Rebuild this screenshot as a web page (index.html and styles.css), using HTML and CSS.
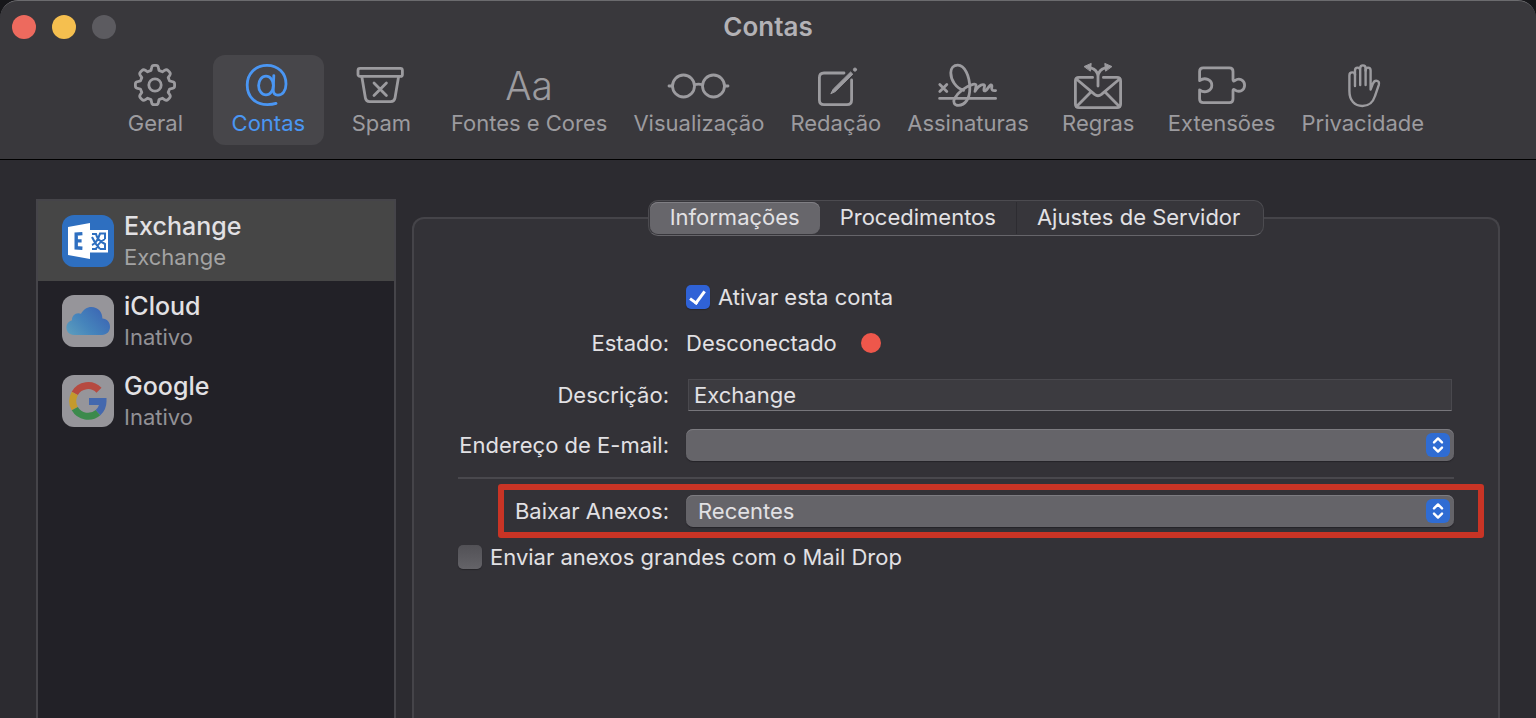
FILE: index.html
```html
<!DOCTYPE html>
<html lang="pt-BR">
<head>
    <meta charset="UTF-8">
    <meta name="viewport" content="width=device-width, initial-scale=1.0">
    <title>Contas</title>
    <link rel="stylesheet" href="styles.css">
</head>
<body>

    <div class="window">
        <header class="toolbar">
            <div class="titlebar">
                <div class="lights">
                    <button class="light close" aria-label="Fechar"></button>
                    <button class="light minimize" aria-label="Minimizar"></button>
                    <button class="light zoom" aria-label="Ampliar" disabled></button>
                </div>
                <h1>Contas</h1>
            </div>

            <nav class="tools">
                <button class="tool">
                    <svg width="64" height="48" viewBox="0 0 64 48">
                        <path d="M28.6 6.6 Q29 4.4 31 4.4 H33 Q35 4.4 35.4 6.6 L36 9.4 L39.4 10.8 L41.8 9.2 Q43.6 8.1 45 9.5 L46.5 11 Q47.9 12.4 46.8 14.2 L45.2 16.6 L46.6 20 L49.4 20.6 Q51.6 21 51.6 23 V25 Q51.6 27 49.4 27.4 L46.6 28 L45.2 31.4 L46.8 33.8 Q47.9 35.6 46.5 37 L45 38.5 Q43.6 39.9 41.8 38.8 L39.4 37.2 L36 38.6 L35.4 41.4 Q35 43.6 33 43.6 H31 Q29 43.6 28.6 41.4 L28 38.6 L24.6 37.2 L22.2 38.8 Q20.4 39.9 19 38.5 L17.5 37 Q16.1 35.6 17.2 33.8 L18.8 31.4 L17.4 28 L14.6 27.4 Q12.4 27 12.4 25 V23 Q12.4 21 14.6 20.6 L17.4 20 L18.8 16.6 L17.2 14.2 Q16.1 12.4 17.5 11 L19 9.5 Q20.4 8.1 22.2 9.2 L24.6 10.8 L28 9.4 Z"/>
                        <circle cx="32" cy="24" r="6.2"/>
                    </svg>
                    <span>Geral</span>
                </button>
                <button class="tool active">
                    <svg width="64" height="48" viewBox="0 0 64 48">
                        <ellipse cx="30" cy="24.5" rx="7.4" ry="9.4"/>
                        <path d="M37.8 14.6 L37.2 28 Q37 34.2 41.9 34.2 C46.7 34.2 50 29.4 50 23 C50 12 42 4.4 31 4.4 C19.4 4.4 11.2 12.6 11.2 24 C11.2 36 19.4 43.6 31.4 43.6 Q36.6 43.6 40 42.4"/>
                    </svg>
                    <span>Contas</span>
                </button>
                <button class="tool">
                    <svg width="64" height="48" viewBox="0 0 64 48">
                        <rect x="9" y="7.4" width="44.4" height="8" rx="2"/>
                        <path d="M12.8 15.6 L16.4 37 Q17 40.6 20.6 40.6 H41.8 Q45.4 40.6 46 37 L49.6 15.6"/>
                        <path d="M25 22 L37.4 34.4 M37.4 22 L25 34.4"/>
                    </svg>
                    <span>Spam</span>
                </button>
                <button class="tool">
                    <span class="letters">Aa</span>
                    <span>Fontes e Cores</span>
                </button>
                <button class="tool">
                    <svg width="64" height="48" viewBox="0 0 64 48">
                        <circle cx="16.5" cy="25" r="11"/>
                        <circle cx="46.5" cy="25" r="11"/>
                        <path d="M2 25 H5.5 M57.5 25 H61"/>
                        <path d="M27.5 23.8 Q31.5 22.4 35.5 23.8"/>
                    </svg>
                    <span>Visualização</span>
                </button>
                <button class="tool">
                    <svg width="64" height="48" viewBox="0 0 64 48">
                        <path d="M40 12 H20 Q15.4 12 15.4 16.6 V39 Q15.4 43.6 20 43.6 H43 Q47.6 43.6 47.6 39 V19"/>
                        <path class="solid" d="M27 32.4 L29.2 28.2 L46.6 11 L48.8 13.2 L31.4 30.4 Z"/>
                        <circle class="solid" cx="51" cy="8.6" r="1.6"/>
                    </svg>
                    <span>Redação</span>
                </button>
                <button class="tool">
                    <svg width="64" height="48" viewBox="0 0 64 48">
                        <path d="M3.8 23.4 L10.8 30.4 M10.8 23.4 L3.8 30.4 M3.6 37.4 H59.6"/>
                        <path d="M27.6 29.4 C20 27 14.8 19.4 14.8 11.8 C14.8 7 17.6 4.2 21.8 4.2 C28.6 4.2 33.8 15 33.8 27.4 C33.8 37.4 29.2 44.4 22.4 44.4 C18.4 44.4 16.6 41.2 18.6 37.4 C21.4 31.8 29.4 25.4 37 23.4 Q40.6 22.6 40 25.4 L39 30.4 C41 27 44.4 23.8 47 23.6 Q49.2 23.6 48.4 26.2 Q47 30.6 49.4 29.8 C51.4 28.8 53 24.8 54.6 24 Q56.4 23.8 55.8 26 Q54.8 30.4 59.6 29.6"/>
                    </svg>
                    <span>Assinaturas</span>
                </button>
                <button class="tool">
                    <svg width="64" height="48" viewBox="0 0 64 48">
                        <path d="M26.6 16.4 H13 Q9.4 16.4 9.4 20 V43 Q9.4 46.6 13 46.6 H51 Q54.6 46.6 54.6 43 V20 Q54.6 16.4 51 16.4 H37.4"/>
                        <path d="M10.4 18 L28.6 33.4 Q32 36 35.4 33.4 L53.6 18 M10.6 45.6 L25.2 30.8 M53.4 45.6 L38.8 30.8"/>
                        <path d="M32 25 V15.6 Q32 11 27.6 8 L24 6.6 M32 15.6 Q32 11 36.4 8 L40 6.6"/>
                        <path class="solid" d="M18.4 5.4 L25.2 2.4 L24.4 9.8 Z M45.6 5.4 L38.8 2.4 L39.6 9.8 Z"/>
                    </svg>
                    <span>Regras</span>
                </button>
                <button class="tool">
                    <svg width="64" height="48" viewBox="0 0 64 48">
                        <path d="M9.6 19.6 V10.4 Q9.6 6.8 13.2 6.8 H39.4 Q43 6.8 43 10.4 V18.6 Q43 20.8 44.8 19.6 C49.2 16.4 54.6 19 54.6 24.2 C54.6 29.4 49.2 32 44.8 28.8 Q43 27.6 43 29.8 V38 Q43 41.6 39.4 41.6 H13.2 Q9.6 41.6 9.6 38 V28.8 C15 33 21.8 29.6 21.8 24.2 C21.8 18.8 15 15.6 9.6 19.6 Z"/>
                    </svg>
                    <span>Extensões</span>
                </button>
                <button class="tool">
                    <svg class="hand" width="64" height="48" viewBox="0 0 64 48">
                        <path d="M24 25 V13.8 Q24 11.4 21.2 11.4 Q18.4 11.4 18.4 14.4 V30 C18.4 39.4 23.6 45 31.4 45 C38.4 45 42 41.4 44 35 L47.8 23.8 Q48.6 20.4 46 19.8 Q43.4 19.2 42 22.4 L39.6 28.6 V9.6 Q39.6 6.6 37 6.6 Q34.6 6.6 34.6 9.6"/>
                        <path d="M29.2 24 V7.4 Q29.2 4.4 31.9 4.4 Q34.6 4.4 34.6 7.4 V24 M24 14 V9.6 Q24 6.6 26.6 6.6 Q29.2 6.6 29.2 9.6"/>
                    </svg>
                    <span>Privacidade</span>
                </button>
            </nav>
        </header>

        <main class="content">
            <ul class="accounts">
                <li>
                    <button class="account selected">
                        <svg width="52" height="52" viewBox="0 0 52 52">
                            <rect width="52" height="52" rx="12" fill="#2e6fc0"/>
                            <path d="M27 15 H46 V37.6 H27 Z" fill="#fff"/>
                            <path d="M30 19 H34 Q35 25 43 29 V34 H38 M43 24 V18.6 H38 Q35 28 30 30 M30 34 H34 Q36 28 43 24 M30 22 Q33 29 38 34" fill="none" stroke="#2e6fc0" stroke-width="2"/>
                            <path d="M6 12 L28 8 V44 L6 40 Z" fill="#fff"/>
                            <path d="M20.4 18.6 L14.2 19 V32.8 L20.4 33.2 M14 25.9 H19.6" fill="none" stroke="#2e6fc0" stroke-width="3.4"/>
                        </svg>
                        <span class="texts">
                            <span class="name">Exchange</span>
                            <span class="state">Exchange</span>
                        </span>
                    </button>
                </li>
                <li>
                    <button class="account">
                        <svg width="52" height="52" viewBox="0 0 52 52">
                            <defs>
                                <linearGradient id="cloud" x1="0" y1="1" x2="1" y2="0.4">
                                    <stop offset="0" stop-color="#5d9fbe"/>
                                    <stop offset="0.5" stop-color="#4583bb"/>
                                    <stop offset="1" stop-color="#3c67b4"/>
                                </linearGradient>
                            </defs>
                            <rect width="52" height="52" rx="12" fill="#96959a"/>
                            <path d="M12 40 C7 40 4.4 36.6 4.4 32.6 C4.4 28.6 7 26 10 25.2 C9.6 20.6 14.4 16.6 19 18.8 C21.4 14.4 25 12 29.4 12 C36 12 40.4 17 40.4 23.6 C45 24 48 27.4 48 31.8 C48 36.6 44.6 40 40 40 Z" fill="url(#cloud)"/>
                        </svg>
                        <span class="texts">
                            <span class="name">iCloud</span>
                            <span class="state">Inativo</span>
                        </span>
                    </button>
                </li>
                <li>
                    <button class="account">
                        <svg width="52" height="52" viewBox="0 0 52 52">
                            <rect width="52" height="52" rx="12" fill="#96959a"/>
                            <g fill="none" stroke-width="7">
                                <path d="M12.8 18.4 A15.2 15.2 0 0 1 37 15.2" stroke="#b64a40"/>
                                <path d="M12.8 33.6 A15.2 15.2 0 0 1 12.8 18.4" stroke="#c49a2c"/>
                                <path d="M36 37.6 A15.2 15.2 0 0 1 12.8 33.6" stroke="#3c8a4c"/>
                                <path d="M27 26.4 H41 A15.2 15.2 0 0 1 36 37.6" stroke="#4468ae"/>
                            </g>
                        </svg>
                        <span class="texts">
                            <span class="name">Google</span>
                            <span class="state">Inativo</span>
                        </span>
                    </button>
                </li>
            </ul>

            <section class="panel">
                <div class="tabs">
                    <button class="tab current">Informações</button>
                    <button class="tab">Procedimentos</button>
                    <button class="tab">Ajustes de Servidor</button>
                </div>

                <form class="form">
                    <div class="row tight">
                        <label class="check second">
                            <input type="checkbox" name="enabled" checked>
                            Ativar esta conta
                        </label>
                    </div>
                    <div class="row state-row">
                        <span class="caption">Estado:</span>
                        <span class="status">Desconectado <i class="dot"></i></span>
                    </div>
                    <div class="row">
                        <label class="caption" for="description">Descrição:</label>
                        <input class="text" type="text" id="description" value="Exchange">
                    </div>
                    <div class="row">
                        <label class="caption" for="email">Endereço de E-mail:</label>
                        <div class="popup">
                            <select id="email">
                                <option></option>
                            </select>
                            <svg class="arrows" width="24" height="24" viewBox="0 0 24 24">
                                <path d="M8 9.4 L12 5.4 L16 9.4 M8 14.6 L12 18.6 L16 14.6"/>
                            </svg>
                        </div>
                    </div>
                    <hr>
                    <div class="row tight marked">
                        <label class="caption" for="attachments">Baixar Anexos:</label>
                        <div class="popup">
                            <select id="attachments">
                                <option>Recentes</option>
                            </select>
                            <svg class="arrows" width="24" height="24" viewBox="0 0 24 24">
                                <path d="M8 9.4 L12 5.4 L16 9.4 M8 14.6 L12 18.6 L16 14.6"/>
                            </svg>
                        </div>
                    </div>
                    <label class="check">
                        <input type="checkbox" name="maildrop">
                        Enviar anexos grandes com o Mail Drop
                    </label>
                </form>
            </section>
        </main>
    </div>

</body>
</html>
```

FILE: styles.css
```css
* {
    box-sizing: border-box;
}
body {
    margin: 0;
    background: #17171a;
    color: #e2e1e4;
    font-family: Inter, "Liberation Sans", sans-serif;
    font-size: 22px;
    line-height: 28px;
}
button, input, select {
    font: inherit;
    color: inherit;
}
button {
    padding: 0;
    border: none;
    background: none;
}
.window {
    display: flex;
    flex-direction: column;
    height: 100vh;
    overflow: hidden;
    background: #2c2b30;
    border-radius: 18px 18px 0 0;
}

/* toolbar */
.toolbar {
    height: 160px;
    flex: none;
    background: #39383c;
    border-top: 1px solid #6b6b6e;
    border-bottom: 1px solid #000;
    border-radius: 18px 18px 0 0;
}
.titlebar {
    display: grid;
    grid-template-columns: 1fr auto 1fr;
    align-items: center;
    height: 52px;
    padding: 0 12px;
}
.lights {
    display: flex;
    gap: 16px;
}
.light {
    width: 24px;
    height: 24px;
    border-radius: 50%;
}
.close {
    background: #ed6a5e;
}
.minimize {
    background: #f5bf4f;
}
.zoom {
    background: #5c5b60;
}
h1 {
    margin: 0;
    font-size: 26px;
    font-weight: 600;
    color: #b3b2b6;
}
.tools {
    display: flex;
    justify-content: center;
    gap: 2px;
    margin-top: 2px;
}
.tool {
    display: flex;
    flex-direction: column;
    align-items: center;
    min-width: 111px;
    height: 90px;
    padding: 6px 12px 0;
    border-radius: 12px;
    color: #9c9b9f;
    white-space: nowrap;
}
.tool.active {
    background: #47464a;
    color: #4a96f3;
}
.tool svg {
    overflow: visible;
    fill: none;
    stroke: currentColor;
    stroke-width: 2.8;
    stroke-linecap: round;
    stroke-linejoin: round;
}
.tool .hand {
    stroke-width: 2.4;
}
.tool .solid {
    fill: currentColor;
    stroke-width: 1;
}
.letters {
    height: 48px;
    line-height: 50px;
    font-size: 39px;
    font-weight: 300;
}

/* accounts */
.content {
    display: flex;
    flex: 1;
    gap: 16px;
    min-height: 0;
    padding: 39px 36px 0;
}
.accounts {
    flex: 0 0 360px;
    margin: 0;
    padding: 0;
    list-style: none;
    background: #222127;
    border: 2px solid #454449;
    border-bottom: none;
}
.account {
    display: flex;
    align-items: center;
    gap: 10px;
    width: 100%;
    height: 80px;
    padding: 0 24px;
    text-align: left;
}
.account.selected {
    background: #464646;
}
.texts {
    display: flex;
    flex-direction: column;
}
.name {
    font-size: 25px;
    line-height: 32px;
    font-weight: 500;
}
.state {
    line-height: 30px;
    color: #929196;
}
.selected .state {
    color: #a3a3a3;
}

/* settings */
.panel {
    flex: 1;
    margin-top: 18px;
    background: #333237;
    border: 2px solid #454449;
    border-bottom: none;
    border-radius: 12px 12px 0 0;
}
.tabs {
    display: flex;
    width: fit-content;
    height: 36px;
    margin: -19px auto 0;
    padding: 1px;
    background: #37363b;
    border: 1px solid #4c4b50;
    border-bottom-color: #66656a;
    border-radius: 10px;
}
.tab {
    padding: 0 20px 2px;
    border-radius: 8px;
}
.tab.current {
    background: #67666b;
    box-shadow: inset 0 1px #807f84;
}
.tab + .tab + .tab {
    padding-right: 22px;
    border-left: 1px solid #2d2c31;
    border-radius: 0;
}
.form {
    padding: 45px 44px 0;
}
.row {
    display: grid;
    grid-template-columns: 211px 1fr;
    column-gap: 17px;
    align-items: center;
    min-height: 32px;
    margin-bottom: 18px;
}
.row.tight {
    margin-bottom: 14px;
}
.row.state-row {
    margin-bottom: 20px;
}
.caption {
    text-align: right;
    white-space: nowrap;
}
.second {
    grid-column: 2;
}
.check {
    display: flex;
    align-items: center;
    gap: 8px;
    min-height: 32px;
}
.check input {
    appearance: none;
    flex: none;
    width: 24px;
    height: 24px;
    margin: 0;
    border-radius: 5px;
    background: linear-gradient(#525156, #646368);
    box-shadow: 0 1px 1px #252429;
}
.check input:checked {
    background: #2f62d6;
}
.check input:checked::before {
    content: "";
    display: block;
    width: 6px;
    height: 13px;
    margin: 3px 7px;
    border: solid #fff;
    border-width: 0 3px 3px 0;
    transform: rotate(36deg);
}
.status {
    display: flex;
    align-items: center;
    gap: 24px;
}
.dot {
    width: 20px;
    height: 20px;
    border-radius: 50%;
    background: #ee574b;
}
.text {
    height: 32px;
    margin: 0 2px;
    padding: 0 5px;
    background: #3c3b40;
    border: 1px solid #4a494e;
    border-bottom-color: #77767b;
    outline: none;
}
.popup {
    position: relative;
}
.popup select {
    display: block;
    appearance: none;
    width: 100%;
    height: 32px;
    padding: 0 36px 0 12px;
    background: #656469;
    border: none;
    border-radius: 7px;
    box-shadow: inset 0 1px #7c7b80, 0 1px 1px #242328;
}
.arrows {
    position: absolute;
    top: 4px;
    right: 4px;
    border-radius: 6px;
    background: #2f6cd3;
    fill: none;
    stroke: #fff;
    stroke-width: 2.4;
    stroke-linecap: round;
    stroke-linejoin: round;
    pointer-events: none;
}
hr {
    height: 2px;
    margin: -2px 0 16px;
    border: none;
    background: #49484d;
}
.marked {
    position: relative;
}
.marked::after {
    content: "";
    position: absolute;
    inset: -11px -30px -11px 40px;
    border: 6px solid #c93425;
    border-radius: 3px;
    pointer-events: none;
}
```
